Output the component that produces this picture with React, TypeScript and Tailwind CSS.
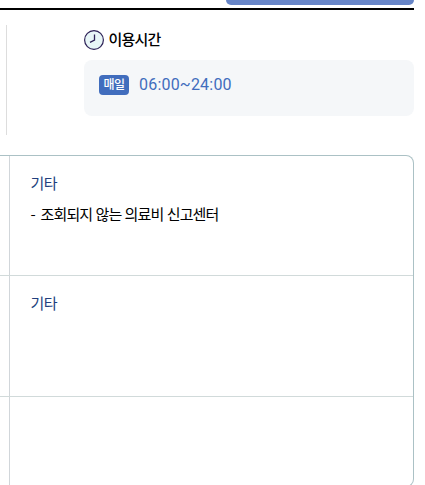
const rows = [
  { id: 1, title: "기타", items: ["조회되지 않는 의료비 신고센터"] },
  { id: 2, title: "기타", items: [] },
  { id: 3, title: "", items: [] },
];

const ClockIcon = () => {
  return (
    <svg className="w-5 h-5 shrink-0" viewBox="0 0 20 20" fill="none">
      <circle cx="10" cy="10" r="9.4" fill="#e8f6f7" stroke="#2d2257" strokeWidth="1.2" />
      <path d="M10.5 4.5V10.2L6 12.4" stroke="#2d2257" strokeWidth="1.3" />
    </svg>
  );
};

const Hours = () => {
  return (
    <div className="flex flex-row h-[110px] mt-[15px] ml-[6px] border-l border-[#dddddd]">
      <div className="ml-[77px] w-[330px] pt-[5px]">
        <div className="flex items-center gap-[4.5px] h-5">
          <ClockIcon />
          <h2 className="text-[15px] leading-[18px] pb-[2px] font-medium tracking-[-0.8px] text-black whitespace-nowrap">
            이용시간
          </h2>
        </div>
        <div className="mt-[10px] h-14 rounded-lg bg-[#f5f7f9] pl-[15px] pt-[15px] flex items-start">
          <span className="w-[30px] h-5 rounded bg-[#416dbd] text-white text-[12px] leading-[18px] font-medium tracking-[-0.5px] text-center whitespace-nowrap">
            매일
          </span>
          <span className="ml-[10px] text-[16px] leading-[19px] tracking-[0.2px] text-[#416dbd] whitespace-nowrap font-[Roboto,sans-serif]">
            06:00~24:00
          </span>
        </div>
      </div>
    </div>
  );
};

const App = () => {
  return (
    <div className="w-full h-[485px] overflow-hidden bg-white font-['Noto_Sans_CJK_KR',sans-serif]">
      <div className="w-[414px]">
        <div className="ml-auto w-[188px] h-[5px] rounded-b-[6px] bg-[#6785c7]" />
        <div className="mt-[3px] h-[2px] bg-black" />
        <Hours />
        <div className="mt-5 h-[332px] border border-l-0 border-[#abc1c5] rounded-r-lg">
          {rows.map((row) => {
            return (
              <div
                key={row.id}
                className="flex h-[121px] first:h-[120px] last:h-[89px] border-b border-[#d1dada] last:border-b-0"
              >
                <div className="w-[10px] shrink-0 border-r border-[#d1d6da]" />
                <div className="pl-[20.5px] pt-[17px]">
                  <p className="h-5 text-[15px] leading-5 tracking-[-0.6px] text-[#223f7e]">
                    {row.title}
                  </p>
                  {row.items.map((item) => {
                    return (
                      <p
                        key={item}
                        className="mt-[11px] flex text-[15px] leading-5 tracking-[-0.85px] [word-spacing:0.7px] text-black whitespace-nowrap"
                      >
                        <span className="w-[10px]">-</span>
                        {item}
                      </p>
                    );
                  })}
                </div>
              </div>
            );
          })}
        </div>
      </div>
    </div>
  );
};

export default App;
